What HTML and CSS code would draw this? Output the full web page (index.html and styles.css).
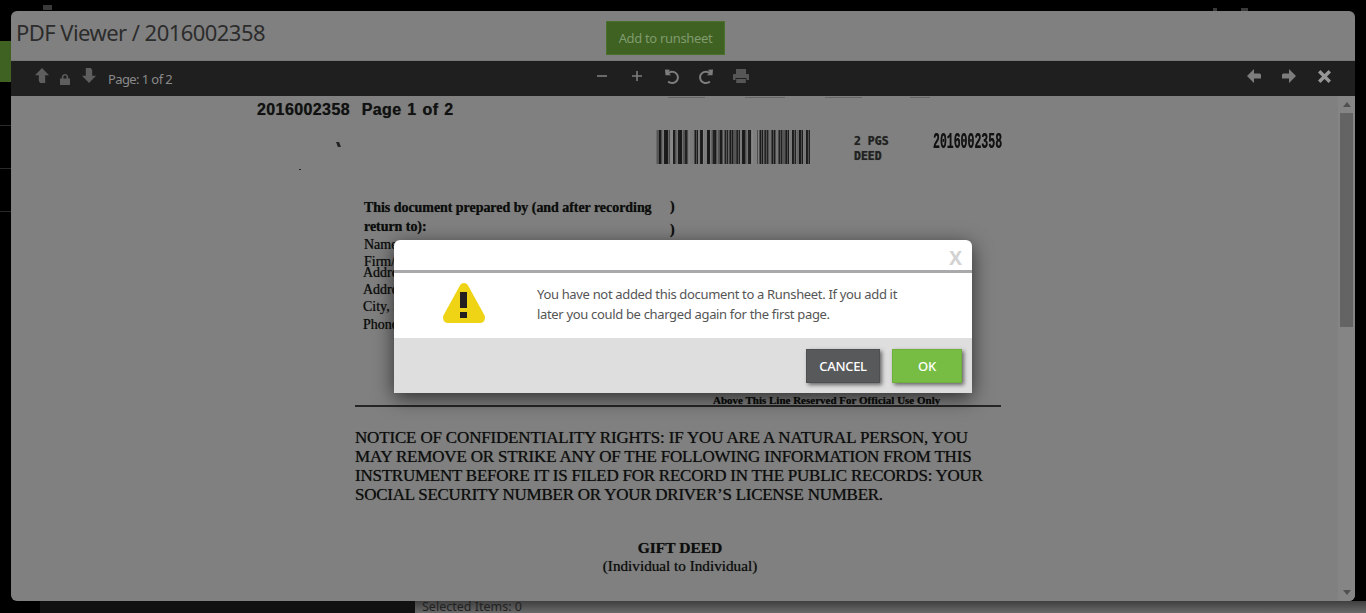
FILE: index.html
```html
<!DOCTYPE html>
<html lang="en">
<head>
<meta charset="utf-8">
<title>PDF Viewer</title>
<link rel="stylesheet" href="styles.css">
</head>
<body>
<div class="app">
  <div class="rail-top"><span class="mark mark-print"></span><span class="mark mark-r1"></span><span class="mark mark-r2"></span></div>
  <div class="rail-green"></div>
  <div class="rail-row"></div>
  <div class="rail-row rail-short"></div>
  <div class="rail-row rail-short"></div>
  <div class="rail-fill"></div>
  <div class="bottom-row">
    <div class="bottom-gap"></div>
    <div class="bottom-dark"></div>
    <div class="bottom-status">Selected Items: 0</div>
  </div>
</div>

<section class="viewer">
  <header class="viewer-head">
    <h1 class="viewer-title">PDF Viewer / 2016002358</h1>
    <button class="runsheet-btn" type="button">Add to runsheet</button>
  </header>
  <div class="toolbar">
    <div class="tool-group tool-left">
      <svg class="ico ico-up" viewBox="0 0 14 15"><path d="M7 0 14 7.2 10.2 7.2 10.2 15 5.2 15 3.8 13 3.8 7.2 0 7.2Z"/></svg>
      <svg class="ico ico-lock" viewBox="0 0 10 11"><path d="M1.8 4.6V3.2C1.8 1.3 3.2 0 5 0s3.2 1.3 3.2 3.2v1.4H10V11H0V4.6ZM3.4 4.6h3.2V3.2C6.600 2.200 5.900 1.500 5 1.500s-1.600.7-1.600 1.700Z"/></svg>
      <svg class="ico ico-down" viewBox="0 0 14 15"><path d="M7 15 0 7.800 3.800 7.800 3.800 0 8.800 0 10.200 2 10.200 7.800 14 7.800Z"/></svg>
      <span class="page-label">Page: 1 of 2</span>
    </div>
    <div class="tool-group tool-center">
      <svg class="ico ico-minus" viewBox="0 0 10 2"><rect width="10" height="1.600" y=".2"/></svg>
      <svg class="ico ico-plus" viewBox="0 0 10 10"><path d="M4.200 0h1.600v4.200H10v1.600H5.800V10H4.200V5.800H0V4.200h4.200Z"/></svg>
      <svg class="ico ico-undo" viewBox="0 0 14 15"><path d="M0 .5 5 .8 3.400 2.900C4.500 2.200 5.700 1.800 7 1.800c3.800 0 6.900 3 6.900 6.600S10.800 15 7 15c-1.700 0-3.300-.6-4.500-1.700l1.300-1.500c.9.800 2 1.200 3.200 1.200 2.700 0 4.900-2.100 4.900-4.600S9.700 3.800 7 3.800c-1.100 0-2 .3-2.800.9L6.300 6.300 .5 6.300Z"/></svg>
      <svg class="ico ico-redo" viewBox="0 0 14 15"><path d="M14 .5 9 .8 10.600 2.900C9.500 2.200 8.300 1.800 7 1.800 3.200 1.800.1 4.800.1 8.400S3.200 15 7 15c1.700 0 3.300-.6 4.500-1.700l-1.300-1.500c-.9.800-2 1.200-3.200 1.200-2.700 0-4.900-2.100-4.900-4.600S4.300 3.800 7 3.800c1.100 0 2 .3 2.800.9L7.700 6.300 13.500 6.300Z"/></svg>
      <svg class="ico ico-print" viewBox="0 0 16 14"><path d="M3 0h10v5H3ZM0 5.800C0 5.300.4 5 1 5h14c.6 0 1 .3 1 .8V11h-2.500V9h-11v2H0ZM3.200 10h9.600v4H3.200Z"/></svg>
    </div>
    <div class="tool-group tool-right">
      <svg class="ico ico-left" viewBox="0 0 14 14"><path d="M7 0V4.500H12.800L14 5.500V9.500H7V14L0 7Z"/></svg>
      <svg class="ico ico-right" viewBox="0 0 14 14"><path d="M7 0V4.500H1.200L0 5.500V9.500H7V14L14 7Z"/></svg>
      <svg class="ico ico-close" viewBox="0 0 14 14"><path d="M2.600 0 7 4.400 11.400 0 14 2.600 9.600 7 14 11.400 11.400 14 7 9.600 2.600 14 0 11.400 4.400 7 0 2.600Z"/></svg>
    </div>
  </div>
  <div class="doc-area">
    <div class="doc">
      <span class="stub stub-a"></span><span class="stub stub-b"></span><span class="stub stub-c"></span><span class="stub stub-d"></span>
      <div class="d-head">2016002358&nbsp; Page 1 of 2</div>
      <span class="speck speck-a"></span><span class="speck speck-b"></span>
      <div class="d-bar"></div>
      <div class="d-pgs">2 PGS<br>DEED</div>
      <div class="d-num">2016002358</div>
      <div class="d-prep">
        <p class="prep-b">This document prepared by (and after recording</p>
        <p class="prep-b">return to):</p>
        <p class="prep-name">Name:</p>
        <p class="prep-f">Firm/Company:</p>
        <p class="prep-n">Address 1:</p>
        <p class="prep-n">Address 2:</p>
        <p class="prep-n">City, State, Zip:</p>
        <p class="prep-n prep-last">Phone:</p>
      </div>
      <div class="d-par d-par-a">)</div>
      <div class="d-par d-par-b">)</div>
      <div class="d-above">Above This Line Reserved For Official Use Only</div>
      <div class="d-rule"></div>
      <div class="d-notice">
        <div class="n1">NOTICE OF CONFIDENTIALITY RIGHTS: IF YOU ARE A NATURAL PERSON, YOU</div>
        <div class="n2">MAY REMOVE OR STRIKE ANY OF THE FOLLOWING INFORMATION FROM THIS</div>
        <div class="n3">INSTRUMENT BEFORE IT IS FILED FOR RECORD IN THE PUBLIC RECORDS: YOUR</div>
        <div class="n4">SOCIAL SECURITY NUMBER OR YOUR DRIVER’S LICENSE NUMBER.</div>
      </div>
      <div class="d-gift">
        <div class="gift-t">GIFT DEED</div>
        <div class="gift-s">(Individual to Individual)</div>
      </div>
    </div>
    <div class="scrollbar">
      <span class="sb-up"></span>
      <span class="sb-thumb"></span>
      <span class="sb-down"></span>
    </div>
  </div>
</section>

<div class="dialog" role="alertdialog">
  <div class="dialog-head"><span class="dialog-x">X</span></div>
  <div class="dialog-body">
    <svg class="warn" viewBox="0 0 42 40"><path d="M21 0c2 0 3.200 1 4.200 2.800L40.800 31c1 1.800 1.400 3 1 5-.5 2.400-2.300 4-4.800 4H5c-2.500 0-4.300-1.600-4.800-4-.4-2 0-3.200 1-5L16.800 2.800C17.800 1 19 0 21 0Z" fill="#efd415"/><rect x="17" y="9" width="7" height="16" fill="#231f20"/><rect x="17" y="29" width="7" height="6" fill="#231f20"/></svg>
    <p class="dialog-text">You have not added this document to a Runsheet. If you add it<br>later you could be charged again for the first page.</p>
  </div>
  <div class="dialog-foot">
    <button class="btn btn-cancel" type="button">CANCEL</button>
    <button class="btn btn-ok" type="button">OK</button>
  </div>
</div>
</body>
</html>
```
FILE: styles.css
```css
* { box-sizing: border-box; }
html, body { margin: 0; padding: 0; }
body { width: 1366px; height: 613px; background: #000; overflow: hidden; position: relative; font-family: "Noto Sans", "Open Sans", sans-serif; }
p, h1 { margin: 0; }

.app { height: 613px; display: flex; flex-direction: column; }
.rail-top { height: 41px; display: flex; align-items: flex-start; }
.mark { display: block; height: 5px; background: #3a3a3a; }
.mark-print { width: 9px; margin: 5px 0 0 43px; }
.mark-r1 { width: 4px; height: 3px; margin: 8px 0 0 1161px; }
.mark-r2 { width: 7px; height: 3px; margin: 8px 0 0 24px; }
.rail-green { width: 11px; height: 41px; background: #3f6122; }
.rail-row { width: 11px; height: 44px; border-bottom: 1px solid #2a2a2a; }
.rail-short { height: 43px; }
.rail-fill { flex: 1; }
.bottom-row { height: 12px; display: flex; }
.bottom-gap { width: 40px; }
.bottom-dark { width: 375px; background: #111112; }
.bottom-status { flex: 1; padding-left: 7px; font-size: 12.500px; line-height: 11px; color: #222; background: linear-gradient(#3f3f3f, #6a6a6a); white-space: nowrap; }

.viewer { position: absolute; left: 11px; top: 11px; width: 1344px; height: 590px; background: #808080; border-radius: 6px; overflow: hidden; display: flex; flex-direction: column; }
.viewer-head { height: 50px; flex: none; position: relative; border-bottom: 1px solid #777; }
.viewer-title { font-size: 22px; font-weight: 400; line-height: 30px; letter-spacing: -.55px; color: #2c2c2c; padding: 6px 0 0 5px; white-space: nowrap; }
.runsheet-btn { position: absolute; left: 595px; top: 10px; width: 119px; height: 34px; padding: 0; background: #3f6122; border: 1px solid #4a7129; color: #7f9c6e; font: inherit; font-size: 13px; letter-spacing: -.33px; }

.toolbar { height: 35px; flex: none; background: #1f1f1f; display: grid; grid-template-columns: 1fr auto 1fr; align-items: center; position: relative; }
.tool-group { display: flex; align-items: center; }
.ico { display: block; flex: none; fill: #7d7d7d; }
.tool-left { padding-left: 24px; }
.ico-up { width: 14px; height: 15px; fill: #5e5e5e; margin-top: -6px; }
.ico-lock { width: 10px; height: 11px; fill: #5e5e5e; margin-left: 11px; margin-top: 2px; }
.ico-down { width: 14px; height: 15px; fill: #5e5e5e; margin-left: 12px; margin-top: -7px; }
.page-label { margin-left: 12px; font-size: 13px; letter-spacing: -.6px; color: #8a8a8a; white-space: nowrap; }
.tool-center { position: absolute; left: 586px; top: 0; height: 30px; }
.ico-minus { width: 10px; height: 2px; fill: #7d7d7d; }
.ico-plus { width: 10px; height: 10px; margin-left: 25px; }
.ico-undo { width: 14px; height: 15px; margin-left: 23px; }
.ico-redo { width: 14px; height: 15px; margin-left: 20px; }
.ico-print { width: 16px; height: 14px; margin-left: 20px; fill: #565656; }
.tool-right { grid-column: 3; justify-content: flex-end; padding-right: 24px; margin-top: -5px; }
.ico-left { width: 14px; height: 14px; }
.ico-right { width: 14px; height: 14px; margin-left: 21px; }
.ico-close { width: 13px; height: 13px; margin-left: 22px; fill: #969696; }

.doc-area { flex: 1; display: flex; min-height: 0; }
.doc { flex: 1; position: relative; overflow: hidden; color: #0d0d0d; font-family: "Liberation Serif", serif; text-shadow: 0 0 .7px rgba(0,0,0,.6); }
.scrollbar { width: 17px; background: #858585; position: relative; flex: none; display: flex; flex-direction: column; align-items: center; }
.sb-up { width: 0; height: 0; margin-top: 6px; border: 4px solid transparent; border-top: 0; border-bottom: 5px solid #505050; }
.sb-thumb { width: 13px; height: 214px; margin-top: 6px; background: #646464; }
.sb-down { width: 0; height: 0; margin-top: auto; margin-bottom: 6px; border: 4px solid transparent; border-bottom: 0; border-top: 5px solid #505050; }

.stub { position: absolute; top: 1px; height: 1px; background: #666; }
.stub-a { left: 657px; width: 37px; }
.stub-b { left: 734px; width: 40px; }
.stub-c { left: 814px; width: 37px; }
.stub-d { left: 899px; width: 20px; }
.speck { position: absolute; background: #222; }
.speck-a { left: 326px; top: 46px; width: 3px; height: 5px; transform: skewX(20deg); }
.speck-b { left: 288px; top: 73px; width: 2px; height: 1px; }
.d-head { position: absolute; left: 246px; top: 5px; font: 700 16px/18px "Liberation Sans", sans-serif; letter-spacing: .4px; word-spacing: 1px; white-space: nowrap; color: #111; }
.d-bar { position: absolute; left: 645px; top: 34px; width: 154px; height: 34px; filter: blur(.45px);
  background:
    repeating-linear-gradient(90deg, rgba(128,128,128,.5) 0 1px, transparent 1px 3px, rgba(20,20,20,.45) 3px 4px, transparent 4px 5px, rgba(150,150,150,.4) 5px 6px, transparent 6px 7px),
    linear-gradient(90deg, #555 0 3px, #1c1c1c 3px 6px, #707070 6px 8px, #1c1c1c 8px 12px, #4a4a4a 12px 14px, #888 14px 17px, #222 17px 20px, #666 20px 22px, #1c1c1c 22px 26px, #555 26px 28px, #222 28px 31px, #7a7a7a 31px 39px, #1c1c1c 39px 42px, #777 42px 44px, #222 44px 47px, #7a7a7a 47px 51px, #1c1c1c 51px 54px, #666 54px 56px, #222 56px 60px, #555 60px 63px, #1c1c1c 63px 66px, #777 66px 68px, #222 68px 72px, #666 72px 74px, #1c1c1c 74px 78px, #555 78px 81px, #222 81px 84px, #777 84px 86px, #1c1c1c 86px 90px, #666 90px 92px, #222 92px 95px, #7f7f7f 95px 103px, #1c1c1c 103px 107px, #666 107px 109px, #222 109px 113px, #707070 113px 116px, #1c1c1c 116px 120px, #777 120px 123px, #222 123px 127px, #555 127px 130px, #1c1c1c 130px 133px, #7a7a7a 133px 136px, #222 136px 140px, #666 140px 143px, #1c1c1c 143px 147px, #777 147px 150px, #222 150px 154px); }
.d-pgs { position: absolute; left: 843px; top: 38px; font: 700 11.500px/15px "DejaVu Sans Mono", "Liberation Mono", monospace; color: #222; white-space: pre; }
.d-num { position: absolute; left: 922px; top: 36px; font: 700 22px/22px "Liberation Mono", monospace; transform-origin: left top; transform: scaleX(.523); white-space: nowrap; color: #111; }
.d-prep { position: absolute; left: 353px; top: 102px; font-size: 14px; white-space: nowrap; }
.prep-b { font-weight: 700; line-height: 19px; letter-spacing: -.05px; }
.prep-name { line-height: 17px; }
.prep-n { line-height: 17px; margin-left: -1px; }
.prep-f { line-height: 7px; padding-top: 5px; padding-bottom: 0; height: 11px; }
.prep-last { padding-top: 1px; }
.d-par { position: absolute; left: 659px; font: 700 14px/18px "Liberation Serif", serif; }
.d-par-a { top: 102px; }
.d-par-b { top: 125px; }
.d-above { position: absolute; left: 702px; top: 298px; font-weight: 700; font-size: 11px; line-height: 13px; white-space: nowrap; }
.d-rule { position: absolute; left: 344px; top: 309px; width: 646px; height: 2px; background: #262626; }
.d-notice { position: absolute; left: 344px; top: 332px; font-size: 17px; line-height: 19px; white-space: nowrap; }
.n1 { letter-spacing: -.17px; }
.n2 { letter-spacing: -.19px; }
.n3 { letter-spacing: -.24px; }
.n4 { letter-spacing: -.26px; }
.d-gift { position: absolute; left: 344px; top: 443px; width: 650px; text-align: center; }
.gift-t { font-weight: 700; font-size: 15.500px; line-height: 18px; }
.gift-s { font-size: 15.200px; line-height: 18px; }

.dialog { position: absolute; left: 394px; top: 240px; width: 578px; height: 153px; border-radius: 6px 6px 0 0; box-shadow: 0 5px 20px rgba(0,0,0,.65); overflow: hidden; display: flex; flex-direction: column; background: #fff; }
.dialog-head { height: 33px; flex: none; border-bottom: 3px solid #a9a9ab; position: relative; }
.dialog-x { position: absolute; right: 10px; top: 7px; font: 700 19px/22px "Open Sans", sans-serif; color: #d2d2d2; }
.dialog-body { height: 65px; flex: none; display: flex; align-items: center; padding-left: 49px; }
.warn { width: 42px; height: 40px; flex: none; margin-top: -6px; }
.dialog-text { margin-left: 52px; font-size: 13px; letter-spacing: -.33px; line-height: 20px; color: #555; white-space: nowrap; margin-top: -3px; }
.dialog-foot { flex: 1; background: #dedede; display: flex; justify-content: flex-end; align-items: flex-start; gap: 12px; padding: 11px 10px 0 0; }
.btn { height: 34px; padding: 0; border: 1px solid; color: #fff; font: inherit; font-size: 13px; font-weight: 500; letter-spacing: -.3px; box-shadow: 2px 2px 4px rgba(0,0,0,.55); }
.btn-cancel { width: 74px; background: #58595b; border-color: #4e4f51; }
.btn-ok { width: 70px; background: #78bd43; border-color: #6fb03c; }
```
